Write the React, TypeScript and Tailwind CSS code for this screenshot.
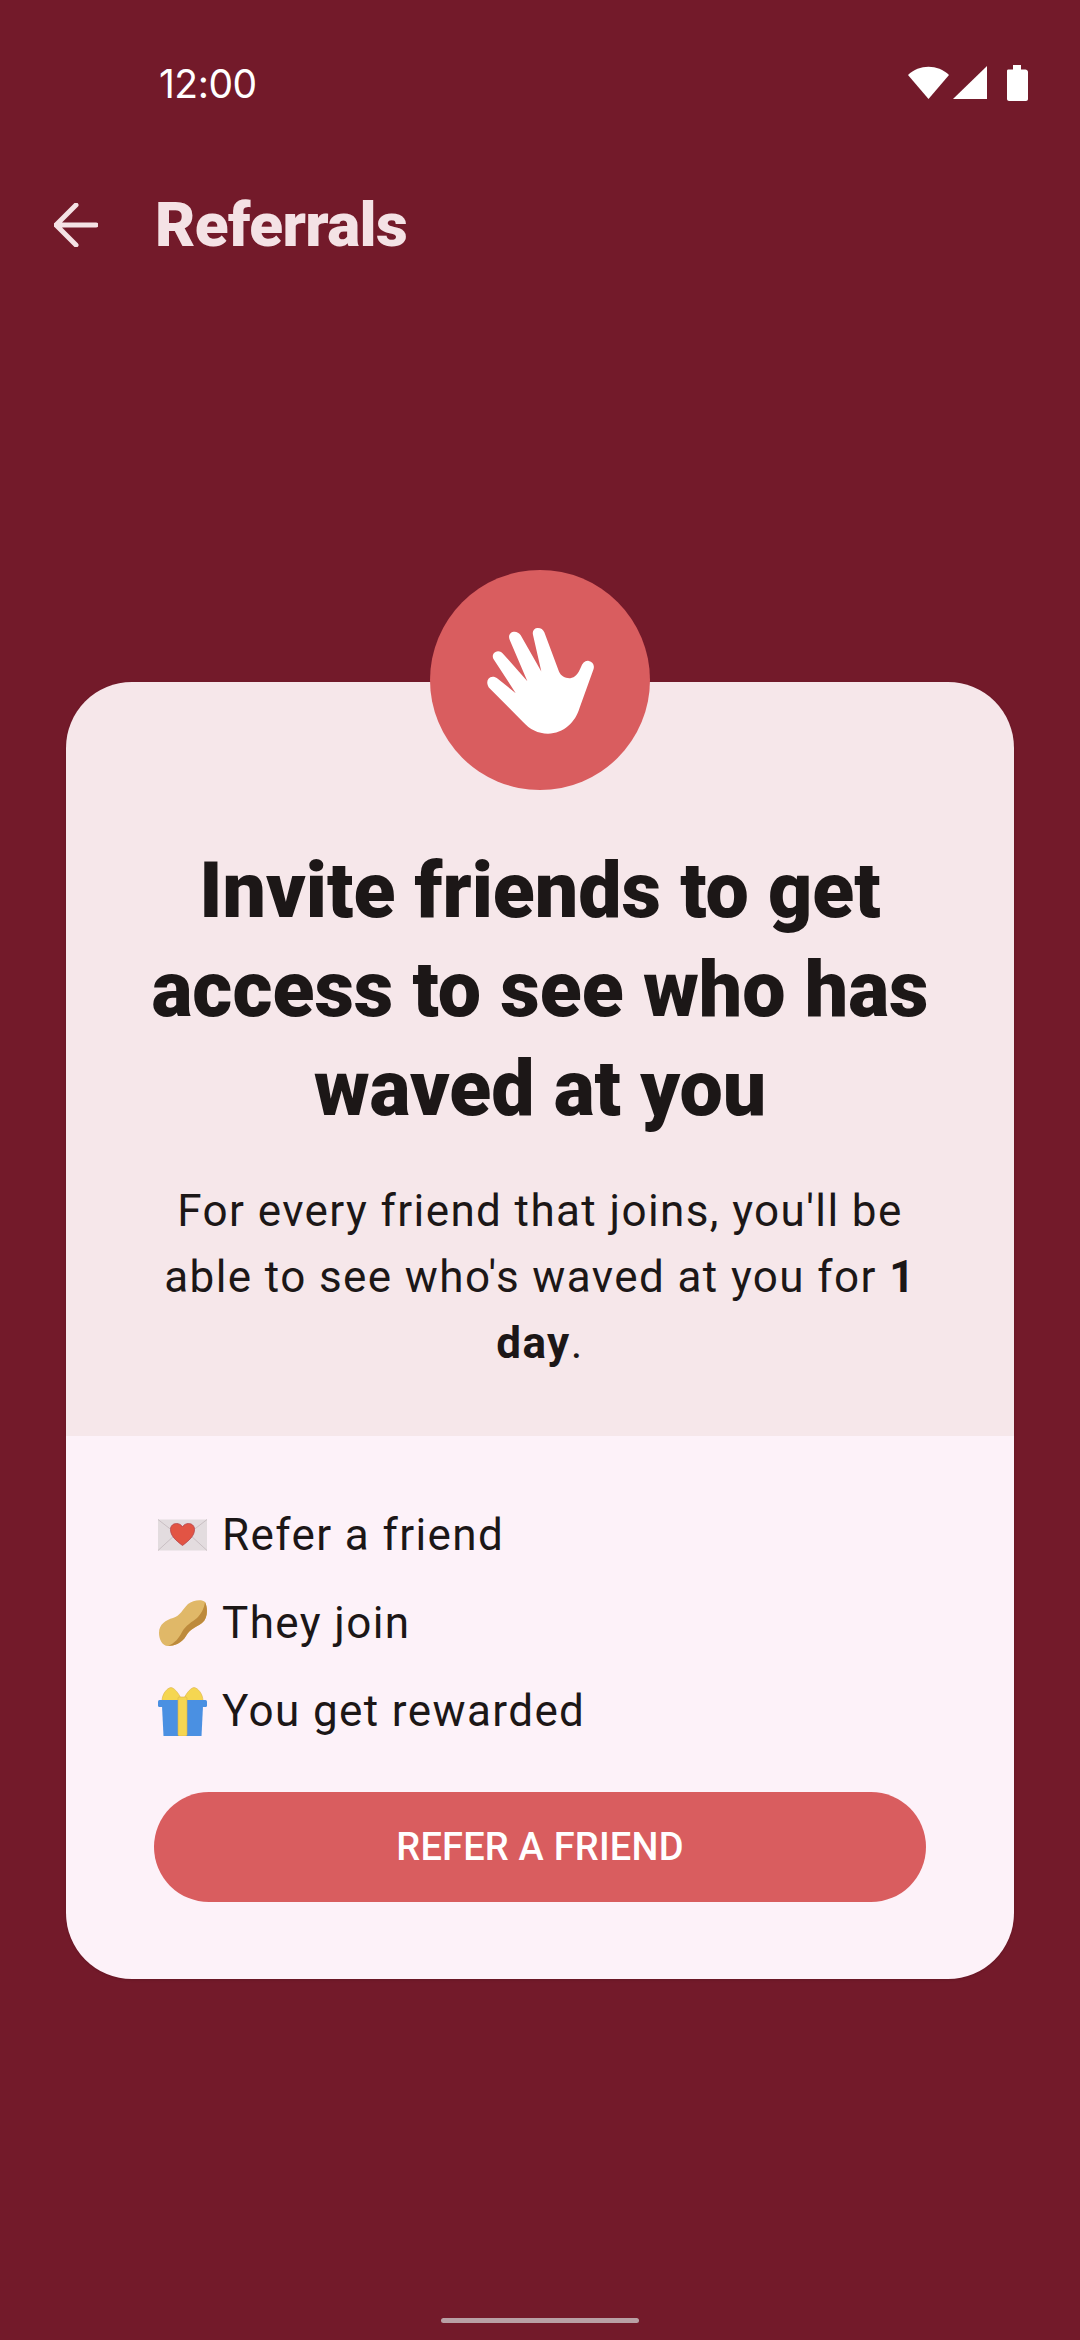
import React from "react";

const Hand = () => (
  <svg viewBox="190 195 345 340" className="w-[115px] h-[113px]" fill="#ffffff">
    <path d="M207 386 C202 378 200 368 206 360 C212 352 224 352 233 359 L288 403 L222 302 C216 292 219 283 227 279 C236 275 245 278 251 286 L323 367 L270 243 C265 231 269 223 278 219 C288 216 297 220 303 229 L365 338 L340 228 C337 216 343 209 352 207 C362 206 370 210 374 220 L418 338 C424 352 438 359 452 358 C466 356 476 345 484 325 C489 311 497 304 508 306 C519 308 526 318 522 331 L480 448 C468 490 432 525 385 525 C355 525 330 512 310 490 Z" />
  </svg>
);

const Envelope = () => (
  <svg viewBox="0 0 49 32" className="w-[49px] h-[32px]">
    <rect width="49" height="31" y="0.5" fill="#e3dcdf" />
    <path d="M0 0.5 L20 16 M49 0.5 L29 16 M0 31.5 L18 15 M49 31.5 L31 15" stroke="#c9bfc3" strokeWidth="1" fill="none" />
    <path d="M24.5 26.5 C18 21.5 12.5 17 12.5 10.5 C12.5 6.5 15.5 4.5 18.5 4.5 C21 4.5 23.5 5.8 24.5 8 C25.5 5.8 28 4.5 30.5 4.5 C33.5 4.5 36.5 6.5 36.5 10.5 C36.5 17 31 21.5 24.5 26.5 Z" fill="#e25444" stroke="#b5424a" strokeWidth="0.8" />
  </svg>
);

const Peanut = () => (
  <svg viewBox="0 0 49 46" className="w-[49px] h-[46px]">
    <path d="M1 33 C1 24 8 20 15 18 C22 16 25 9 30 4 C35 0 44 -1 47 2 C50 8 50 18 44 23 C37 28 33 28 28 36 C24 43 16 46 10 46 C4 46 1 39 1 33 Z" fill="#e0b868" />
    <path d="M47 2 C50 8 50 18 44 23 C37 28 33 28 28 36 C24 43 16 46 10 46 C17 43 21 38 24 32 C28 25 34 22 39 18 C43 14 46 9 47 2 Z" fill="#bd8a3c" />
  </svg>
);

const Gift = () => (
  <svg viewBox="0 0 49 49" className="w-[49px] h-[49px]">
    <path d="M4 14 C4 7 9 1 13 0.5 C17 1 22 8 24 14 Z M45 14 C45 7 40 1 36 0.5 C32 1 27 8 25 14 Z" fill="#f5d651" stroke="#dbb24a" strokeWidth="0.6" />
    <path d="M4 19 H45 L43.5 49 H5.5 Z" fill="#4a90e2" />
    <rect x="0" y="13" width="49" height="7" rx="1.5" fill="#4a90e2" />
    <rect x="20" y="10" width="9" height="39" rx="1.5" fill="#f5d651" stroke="#dbb24a" strokeWidth="0.6" />
  </svg>
);

const steps = [
  { key: "refer", icon: <Envelope />, text: "Refer a friend" },
  { key: "join", icon: <Peanut />, text: "They join" },
  { key: "reward", icon: <Gift />, text: "You get rewarded" },
];

const App = () => {
  return (
    <div className="w-[1080px] h-[2340px] bg-[#731a2a] flex flex-col font-['Roboto',sans-serif] overflow-hidden">
      {/* status bar */}
      <div className="h-[168px] shrink-0 pl-[159px] pr-[52px] flex items-start justify-between pt-[61px]">
        <span className="text-[39px] leading-[46px] text-white font-['Inter',sans-serif] tracking-[-0.5px]">
          12:00
        </span>
        <svg width="120" height="36" viewBox="0 0 120 36" fill="#ffffff" className="mt-[4px]">
          <path d="M0 10 C11 -1 30 -1 41 10 L20.5 34 Z" />
          <path d="M45 34 L79 1 V34 Z" />
          <path d="M99 6 C99 5 99.500 4.500 100.500 4.500 H105 V0 H113 V4.500 H117.500 C118.500 4.500 120 5.500 120 7 V34 C120 35 119 36 118 36 H101 C100 36 99 35 99 34 Z" />
        </svg>
      </div>

      {/* app bar */}
      <div className="flex items-center pl-[54px] h-[114px] shrink-0">
        <svg width="44" height="44" viewBox="0 0 44 44" fill="none" stroke="#f4e2e5" strokeWidth="5" strokeLinecap="round" strokeLinejoin="round">
          <path d="M42 22 H2 M22 2 L2 22 L22 42" />
        </svg>
        <h1 className="ml-[57px] text-[62px] leading-[64px] font-black text-[#f4e2e5] tracking-[-0.6px]">
          Referrals
        </h1>
      </div>

      {/* card */}
      <div className="mt-[400px] mx-[66px] relative">
        <div className="absolute left-[364px] -top-[112px] w-[220px] h-[220px] rounded-full bg-[#d95d5f] flex items-center justify-center z-10">
          <Hand />
        </div>
        <div className="rounded-[66px] overflow-hidden shadow-sm">
          <div className="bg-[#f6e7ea] pt-[160px] pb-[60px] px-[66px] text-center text-[#1c1717]">
            <h2 className="text-[77px] leading-[99px] font-black">
              Invite friends to get access to see who has waved at you
            </h2>
            <p className="mt-[39px] px-[10px] text-[44px] leading-[66px] tracking-[1.4px]">
              For every friend that joins, you'll be able to see who's waved at you for <b>1 day</b>.
            </p>
          </div>
          <div className="bg-[#fdf2f9] pt-[66px] pb-[77px] px-[88px] text-[#1c1717]">
            <div className="flex flex-col gap-[22px]">
              {steps.map((step) => (
                <div key={step.key} className="flex items-center h-[66px] pl-[4px]">
                  <div className="w-[49px] flex justify-center shrink-0">{step.icon}</div>
                  <span className="ml-[15px] text-[44px] leading-[66px] tracking-[1.4px]">{step.text}</span>
                </div>
              ))}
            </div>
            <button className="mt-[48px] w-full h-[110px] rounded-[55px] bg-[#d95d5f] text-white text-[38px] font-medium tracking-[0.2px]">
              REFER A FRIEND
            </button>
          </div>
        </div>
      </div>

      {/* gesture bar */}
      <div className="mt-auto mb-[17px] mx-auto w-[198px] h-[5px] rounded-full bg-[#b9a0a5]" />
    </div>
  );
};

export default App;
